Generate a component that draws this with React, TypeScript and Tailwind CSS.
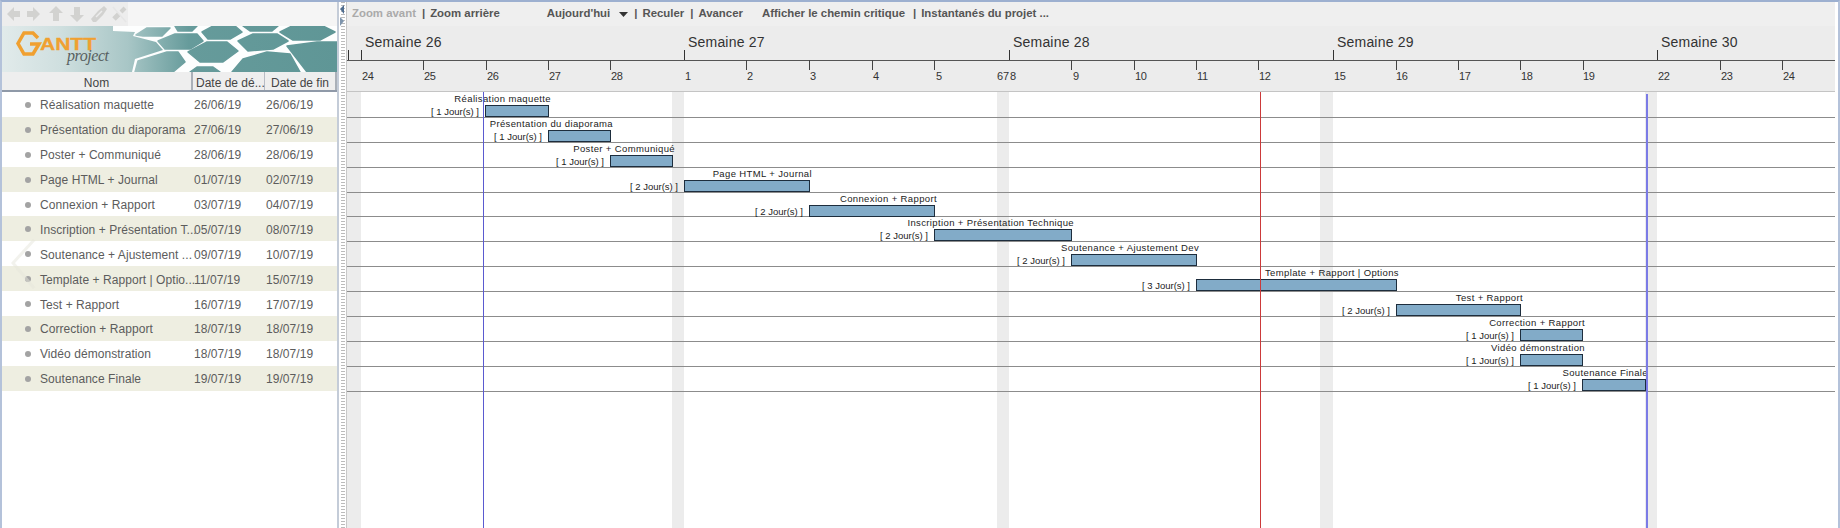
import React from "react";

const tasks = [
  { name: "Réalisation maquette", list: "Réalisation maquette", start: "26/06/19", end: "26/06/19", a: 485, b: 548, d: 1 },
  { name: "Présentation du diaporama", list: "Présentation du diaporama", start: "27/06/19", end: "27/06/19", a: 548, b: 610, d: 1 },
  { name: "Poster + Communiqué", list: "Poster + Communiqué", start: "28/06/19", end: "28/06/19", a: 610, b: 672, d: 1 },
  { name: "Page HTML + Journal", list: "Page HTML + Journal", start: "01/07/19", end: "02/07/19", a: 684, b: 809, d: 2 },
  { name: "Connexion + Rapport", list: "Connexion + Rapport", start: "03/07/19", end: "04/07/19", a: 809, b: 934, d: 2 },
  { name: "Inscription + Présentation Technique", list: "Inscription + Présentation T...", start: "05/07/19", end: "08/07/19", a: 934, b: 1071, d: 2 },
  { name: "Soutenance + Ajustement Dev", list: "Soutenance + Ajustement ...", start: "09/07/19", end: "10/07/19", a: 1071, b: 1196, d: 2 },
  { name: "Template + Rapport | Options", list: "Template + Rapport | Optio...", start: "11/07/19", end: "15/07/19", a: 1196, b: 1396, d: 3 },
  { name: "Test + Rapport", list: "Test + Rapport", start: "16/07/19", end: "17/07/19", a: 1396, b: 1520, d: 2 },
  { name: "Correction + Rapport", list: "Correction + Rapport", start: "18/07/19", end: "18/07/19", a: 1520, b: 1582, d: 1 },
  { name: "Vidéo démonstration", list: "Vidéo démonstration", start: "18/07/19", end: "18/07/19", a: 1520, b: 1582, d: 1 },
  { name: "Soutenance Finale", list: "Soutenance Finale", start: "19/07/19", end: "19/07/19", a: 1582, b: 1645, d: 1 },
];

const X0 = 347;
const weeks = [
  { t: "Semaine 26", x: 361 },
  { t: "Semaine 27", x: 684 },
  { t: "Semaine 28", x: 1009 },
  { t: "Semaine 29", x: 1333 },
  { t: "Semaine 30", x: 1657 },
];
const dayTicks = [423, 486, 548, 610, 746, 809, 872, 934, 1071, 1134, 1196, 1258, 1396, 1458, 1520, 1583, 1720, 1782];
const days = [
  ["24", 362], ["25", 424], ["26", 487], ["27", 549], ["28", 611], ["1", 685], ["2", 747], ["3", 810], ["4", 873], ["5", 936],
  ["6", 997], ["7", 1003], ["8", 1010], ["9", 1073], ["10", 1135], ["11", 1197], ["12", 1259], ["15", 1334], ["16", 1396], ["17", 1459],
  ["18", 1521], ["19", 1583], ["22", 1658], ["23", 1721], ["24", 1783],
] as [string, number][];
const weekends = [[347, 361], [672, 684], [997, 1009], [1320, 1333], [1645, 1657]];

const hexes = [
  "136,36 147,29 170,29 162,37 143,37",
  "158,42 175,35 197,35 203,42 190,50 165,50",
  "202,33 213,27 235,27 242,33 230,40 208,40",
  "238,42 253,35 277,35 288,42 273,50 248,52",
  "188,53 207,43 227,43 238,52 223,63 200,63",
  "280,33 292,27 323,27 335,33 320,41 293,41",
  "135,73 138,62 167,53 178,53 185,63 173,73",
  "232,73 243,60 267,53 290,55 300,73",
  "287,47 317,43 337,43 337,73 307,73",
  "190,73 197,68 213,68 220,73",
  "175,27 197,27 192,32 178,32",
  "243,27 278,27 272,32 250,32",
];

function ToolIcons() {
  return (
    <svg width="128" height="24" viewBox="0 0 128 24" className="shrink-0">
      <g fill="#d2d2d0">
        <path d="M7 12 L14 5 V9 H20 V15 H14 V19 Z" />
        <path d="M40 12 L33 5 V9 H27 V15 H33 V19 Z" />
        <path d="M56 4 L63 11 H59 V19 H53 V11 H49 Z" />
        <path d="M77 20 L84 13 H80 V5 H74 V13 H70 Z" />
        <path d="M91 17 L98 9 L104 4 L107 7 L103 13 L96 20 L93 20 Z" />
      </g>
      <path d="M96 15 L102 9" stroke="#ececec" strokeWidth="1.5" />
      <g stroke="#d2d2d0" fill="none">
        <path d="M114 17 L119 12" strokeWidth="5" />
        <path d="M121 10 L125 6" strokeWidth="4" />
        <path d="M113 5 L126 20" strokeWidth="1.5" stroke="#e6e6e6" />
      </g>
    </svg>
  );
}

function Logo() {
  return (
    <svg width="335" height="46" viewBox="2 27 335 46" className="block" style={{ fontFamily: '"Liberation Sans", sans-serif' }}>
      <defs>
        <linearGradient id="hexg" gradientUnits="userSpaceOnUse" x1="0" y1="0" x2="337" y2="0">
          <stop offset="0" stopColor="#e2ebeb" />
          <stop offset="0.18" stopColor="#cfdfdf" />
          <stop offset="0.38" stopColor="#a8c6c6" />
          <stop offset="0.56" stopColor="#669b9b" />
          <stop offset="1" stopColor="#5f9696" />
        </linearGradient>
      </defs>
      <rect x="2" y="27" width="335" height="46" fill="url(#hexg)" />
      <polygon points="113,27 337,27 337,73 132,73 135,60 163,51 156,43 133,37 135,33 113,32" fill="#fdfefe" />
      {hexes.map((p, i) => (
        <polygon key={i} points={p} fill="url(#hexg)" stroke="url(#hexg)" strokeWidth="1.5" strokeLinejoin="round" />
      ))}
      <path d="M38 39 L33 34 H24 L18 44.5 L24 55 H33 L39 45 H30" fill="none" stroke="#f0a030" strokeWidth="3.5" strokeLinejoin="miter" />
      <text x="40" y="50.5" fontSize="16" fontWeight="700" fill="#f0a030" stroke="#f0a030" strokeWidth="0.3" textLength="56" lengthAdjust="spacingAndGlyphs">ANTT</text>
      <text x="67" y="62" fontSize="16" fontStyle="italic" fill="#585f60" textLength="42" style={{ fontFamily: '"Liberation Serif", serif' }}>project</text>
    </svg>
  );
}

function Sep({ children, cls }: { children: React.ReactNode; cls: string }) {
  return <span className={cls}>{children}</span>;
}

export default function App() {
  return (
    <div className="w-[1840px] h-[528px] flex bg-white border-t-2 border-x-2 border-t-[#9db0d0] border-x-[#b4c2da] overflow-hidden font-['Liberation_Sans',sans-serif]">
      {/* left panel */}
      <div className="w-[335px] shrink-0 flex flex-col relative">
        <div className="h-[24px] bg-[#f5f5f5] flex items-center">
          <div className="bg-[#ededed] h-full w-[128px] -ml-[2px]">
            <ToolIcons />
          </div>
        </div>
        <div className="h-[46px]">
          <Logo />
        </div>
        <div className="h-[20px] flex bg-[#eeeeee] border-b-2 border-b-[#8f99a8] text-[12px] text-[#444] pt-[3px]">
          <div className="w-[191px] -mt-[3px] pt-[3px] flex items-center justify-center border-r-2 border-r-[#aab0b8]">Nom</div>
          <div className="w-[72px] -mt-[3px] pt-[3px] flex items-center pl-[3px] border-r border-r-[#b8bcc4] whitespace-nowrap">Date de dé...</div>
          <div className="w-[72px] -mt-[3px] pt-[3px] flex items-center justify-center border-r-2 border-r-[#aab0b8]">Date de fin</div>
        </div>
        <div className="flex flex-col text-[12px] text-[#5c5c5c] tracking-[0.06px]">
          {tasks.map((t, i) => (
            <div key={i} className={`h-[24.9px] pt-[2px] flex items-center whitespace-nowrap ${i % 2 === 1 ? "bg-[#eeeee1]" : "bg-white"}`}>
              <div className="w-[38px] shrink-0 flex justify-end pr-[9px]">
                <div className="w-[6px] h-[6px] rounded-full bg-[#a3a3a3] shrink-0 -mt-[1px]" />
              </div>
              <div className="w-[154px] shrink-0">{t.list}</div>
              <div className="w-[72px] shrink-0">{t.start}</div>
              <div>{t.end}</div>
            </div>
          ))}
        </div>
        <svg width="30" height="56" viewBox="0 0 30 56" className="absolute left-[8px] top-[236px] pointer-events-none">
          <path d="M24 2 L3 25 L24 50" fill="none" stroke="#e6e6dc" strokeWidth="3" opacity="0.5" />
        </svg>
      </div>

      {/* splitter */}
      <div className="w-[9px] shrink-0 flex">
        <div className="w-[2px] bg-[#c4ccd8]" />
        <div className="w-[2px] relative">
          <svg width="6" height="24" viewBox="0 0 6 24" className="absolute left-0 top-[2px]">
            <path d="M5 1 L1 5 L5 10 Z" fill="#4f6d8f" />
            <path d="M1 13 L5 17 L1 22 Z" fill="#7f95ad" />
          </svg>
        </div>
        <div className="w-[4px] bg-[repeating-linear-gradient(0deg,#bbbbbb_0,#bbbbbb_1px,#ffffff_1px,#ffffff_3px)]" />
        <div className="w-[1px] bg-white" />
      </div>

      {/* right panel */}
      <div className="w-[1489px] shrink-0 flex flex-col border-l border-l-[#c8c8c8]">
        <div className="h-[24px] bg-[#efefef] flex items-center pl-[5px] text-[11.4px] font-bold text-[#555] whitespace-nowrap">
          <Sep cls="text-[#aaaaaa]">Zoom avant</Sep>
          <Sep cls="ml-[6px]">|</Sep>
          <Sep cls="ml-[5px]">Zoom arrière</Sep>
          <Sep cls="ml-[47px]">Aujourd'hui</Sep>
          <svg width="9" height="5" viewBox="0 0 9 5" className="ml-[9px]"><path d="M0 0 H9 L4.5 5 Z" fill="#333" /></svg>
          <Sep cls="ml-[6px]">|</Sep>
          <Sep cls="ml-[5px]">Reculer</Sep>
          <Sep cls="ml-[6px]">|</Sep>
          <Sep cls="ml-[5px]">Avancer</Sep>
          <Sep cls="ml-[19px]">Afficher le chemin critique</Sep>
          <Sep cls="ml-[8px]">|</Sep>
          <Sep cls="ml-[5px]">Instantanés du projet ...</Sep>
        </div>

        <div className="h-[66px] bg-[#ececec] relative border-b border-b-[#c4c4c4] text-[#333]">
          {weeks.map((w) => (
            <span key={w.x} className="absolute top-[6px] text-[14px] leading-[20px] tracking-[0.2px]" style={{ left: w.x - X0 + 4 }}>{w.t}</span>
          ))}
          <div className="absolute left-0 right-0 top-[34px] h-[1px] bg-[#555]" />
          {[348, 361, 684, 1009, 1333, 1657].map((x) => (
            <div key={x} className="absolute top-[24px] w-[1px] h-[10px] bg-[#333]" style={{ left: x - X0 }} />
          ))}
          {dayTicks.map((x) => (
            <div key={x} className="absolute top-[34px] w-[1px] h-[10px] bg-[#444]" style={{ left: x - X0 }} />
          ))}
          {days.map(([t, x], i) => (
            <span key={i} className="absolute top-[42px] text-[11px] leading-[16px] tracking-[-0.4px]" style={{ left: x - X0 }}>{t}</span>
          ))}
        </div>

        <div className="relative flex-1 flex flex-col">
          {weekends.map(([a, b]) => (
            <div key={a} className="absolute top-0 bottom-0 bg-[#ececec]" style={{ left: a - X0, width: b - a }} />
          ))}
          <div className="h-[1px] shrink-0" />
          {tasks.map((t, i) => (
            <div key={i} className="h-[24.9px] shrink-0 relative border-b border-b-[#8c8c8c] text-[9.5px] leading-[12px] text-[#222] whitespace-nowrap">
              <span className="absolute top-[0px] tracking-[0.37px]" style={{ right: 1489 - (t.b + 4 - X0) }}>{t.name}</span>
              <span className="absolute top-[13px]" style={{ right: 1489 - (t.a - 5 - X0) }}>[ {t.d} Jour(s) ]</span>
              <div className="absolute top-[12px] h-[12px] bg-[#82abc8] border border-[#1d2d3d]" style={{ left: t.a - X0, width: t.b - t.a + 1 }} />
            </div>
          ))}
          <div className="absolute top-0 bottom-0 w-[1px] bg-[#5a5ad0]" style={{ left: 483 - X0 }} />
          <div className="absolute top-0 bottom-0 w-[1px] bg-[#cc3a3a]" style={{ left: 1260 - X0 }} />
          <div className="absolute top-[2px] bottom-0 w-[2px] bg-[#7b7be6]" style={{ left: 1646 - X0 }} />
        </div>
      </div>
    </div>
  );
}
